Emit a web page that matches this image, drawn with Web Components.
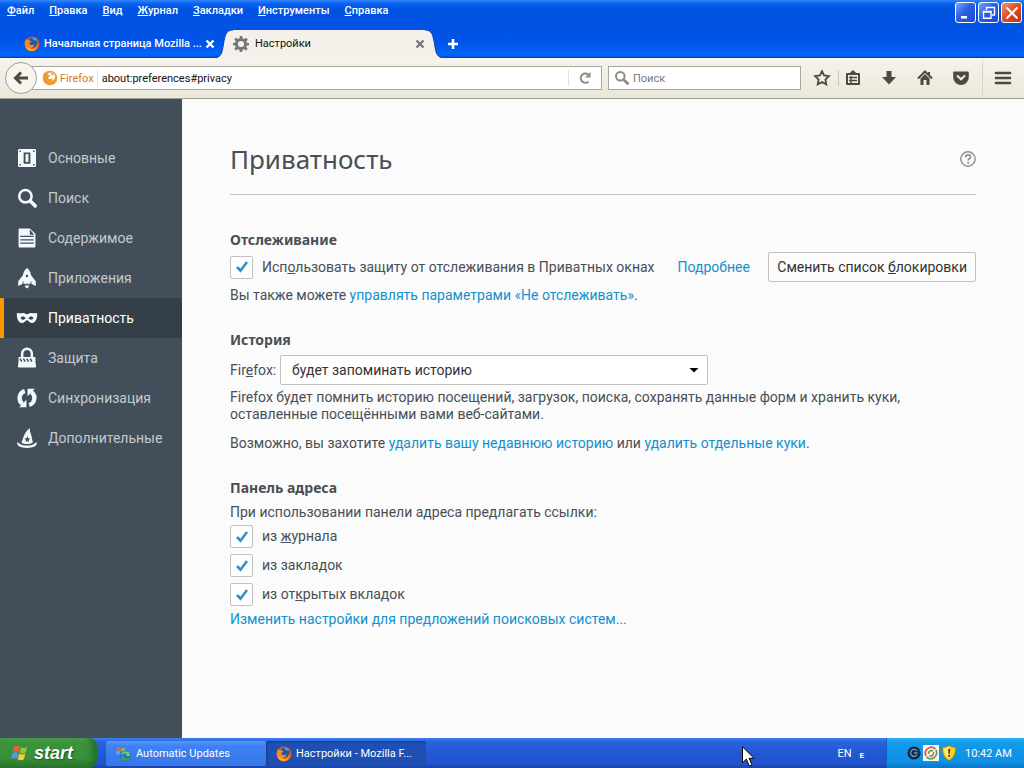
<!DOCTYPE html>
<html lang="ru">
<head>
<meta charset="utf-8">
<title>Настройки</title>
<style>
    body {
        margin: 0;
        font-family: Roboto, "Noto Sans", sans-serif;
        font-size: 14px;
        line-height: 17px;
    }
</style>
</head>
<body>
<desktop-screen>
    <title-bar slot="window"></title-bar>
    <nav-toolbar slot="window"></nav-toolbar>
    <prefs-sidebar slot="side">
        <category-item icon="general">Основные</category-item>
        <category-item icon="search">Поиск</category-item>
        <category-item icon="content">Содержимое</category-item>
        <category-item icon="apps">Приложения</category-item>
        <category-item icon="privacy" selected>Приватность</category-item>
        <category-item icon="security">Защита</category-item>
        <category-item icon="sync">Синхронизация</category-item>
        <category-item icon="advanced">Дополнительные</category-item>
    </prefs-sidebar>
    <privacy-pane slot="main"></privacy-pane>
    <task-bar slot="taskbar"></task-bar>
</desktop-screen>

<script>
const ICONS = {
    firefox: `<circle cx="8" cy="8" r="7.5" fill="#e2581b"/><circle cx="8.5" cy="6.8" r="5" fill="#27589b"/><path d="M8 2c3-.5 5 1 5.500 3-1-1-2-1-3-.5z" fill="#59a8da"/><path d="M1.500 3.500C3 4 4 4 5 3.500c.3 1 1.200 1.400 2.300 1.800-.2 1-1.800 1.200-1.800 2.200 0 1.800 3 2.300 5 .8-.5 2.700-2.500 4-4.700 3.700 3 2 7.200-.5 7.400-4.700 1.500 3-.8 7.800-5.200 7.900C3 15.500-1 10 1.500 3.500z" fill="#f58a20"/><path d="M2 11c2 3.500 6.500 5 10 2-3 1-6 .5-8-1.500z" fill="#ffc22e"/>`,
    identity: `<circle cx="8" cy="8" r="7.300" fill="#f19a31"/><circle cx="9" cy="6.500" r="4" fill="#fff"/><path d="M2 2.500 5.500 4c.6 1 1.500 1 2.800 1.500-.2 1.200-2 1-2 2.300 0 1.500 2.500 2 4.700.5-.5 2.500-3 3.700-5 3.200C3 11 1 7 2 2.500z" fill="#f19a31"/><path d="M9 2.500c2 .4 3 2 2.800 3.500-.6-.8-1.400-1-2.300-1z" fill="#f19a31"/>`,
    gear: `<path d="M6.800 0h2.400l.4 2.500 1.500.6 2-1.400 1.700 1.700-1.400 2 .5 1.400 2.100.2v2.200l-2.200.4-.5 1.400 1.400 2-1.700 1.600-2-1.300-1.400.5L9.200 16H6.800l-.4-2.200-1.500-.5-2 1.300L1.300 13l1.400-2-.6-1.400L0 9.200V7l2.200-.4.5-1.300-1.400-2L3 1.700l2 1.400 1.400-.6zM8 4.900a3.100 3.100 0 1 0 0 6.200 3.100 3.100 0 0 0 0-6.200z" fill="#767676" fill-rule="evenodd"/>`,
    close: `<path d="m4.500 4.500 7 7m0-7-7 7" stroke="currentColor" stroke-width="2.400" fill="none"/>`,
    plus: `<path d="M8 3v10M3 8h10" stroke="currentColor" stroke-width="2.600"/>`,
    back: `<path d="M8 2.500 2.500 8 8 13.500M3 8h12" stroke="currentColor" stroke-width="3" fill="none"/>`,
    reload: `<path d="M11.600 11.500A4.600 4.600 0 1 1 11.200 4.500" stroke="currentColor" stroke-width="2" fill="none"/><path d="M13.500 2v5.500H8z" fill="currentColor"/>`,
    magnifier: `<circle cx="6.300" cy="6.300" r="4.300" stroke="currentColor" stroke-width="2" fill="none"/><path d="m9.700 9.700 4.800 4.500" stroke="currentColor" stroke-width="2.800"/>`,
    star: `<path d="m8 1.200 2.100 4.300 4.800.7-3.500 3.400.9 4.800L8 12.100l-4.300 2.300.9-4.800L1.100 6.200l4.800-.7z" stroke="currentColor" stroke-width="1.800" fill="none"/>`,
    list: `<path d="M2 4h3l1.500-1.300L8 1.300l1.500 1.400L11 4h3v10H2z" fill="none" stroke="currentColor" stroke-width="2" stroke-linejoin="round"/><path d="M5 3h6v2H5z" fill="currentColor"/><path d="M4 7.500h8M4 10.500h8M6 6v7" stroke="currentColor" stroke-width="1.400"/>`,
    download: `<path d="M5.500 1h5v6H15l-7 7.500L1 7h4.500z" fill="currentColor"/>`,
    home: `<path d="m1 8.500 7-7 7 7" fill="none" stroke="currentColor" stroke-width="2"/><path d="M11 2h2v4h-2zM3.500 8.500 8 4l4.500 4.500V15h-3v-5h-3v5h-3z" fill="currentColor"/>`,
    pocket: `<path d="M1.500 1.500h13c.8 0 1.300.5 1.300 1.300v4.400a7.800 7.800 0 0 1-15.600 0V2.800c0-.8.500-1.300 1.300-1.300z" fill="currentColor"/><path d="M4.500 6 8 9.300 11.500 6" fill="none" stroke="#efece0" stroke-width="2" stroke-linecap="round"/>`,
    menu: `<path d="M1 3h14M1 8h14M1 13h14" stroke="currentColor" stroke-width="2.700" stroke-linecap="round"/>`,
    general: `<path fill-rule="evenodd" d="M1 0h14a1 1 0 0 1 1 1v14a1 1 0 0 1-1 1H1a1 1 0 0 1-1-1V1a1 1 0 0 1 1-1zM5 3v10h6V3zM1.300 1.300v1.300h1.300V1.300zm12.100 0v1.300h1.300V1.300zM1.300 13.400v1.300h1.300v-1.300zm12.100 0v1.300h1.300v-1.300z" fill="currentColor"/><path d="M6.700 4.500h2.600v7H6.700z" fill="currentColor"/>`,
    search: `<circle cx="6.600" cy="6.400" r="5.500" stroke="currentColor" stroke-width="2.300" fill="none"/><path d="m10.900 10.700 4.400 4.300" stroke="currentColor" stroke-width="3.200" stroke-linecap="round"/>`,
    content: `<path fill-rule="evenodd" d="M1.500-.5h9l5 4.800v11c0 .7-.4 1.200-1 1.200h-13c-.6 0-1-.5-1-1.200V.5c0-.6.400-1 1-1zm9 1V5h4zM2 6v1.200h12V6zm0 3v1.200h12V9zm0 3v1.200h12V12z" fill="currentColor"/>`,
    apps: `<path d="M8-1c2.200 1.600 3.300 3.800 3.600 6.500l4.200 5.300V15l-4-1.800H4.200l-4 1.800v-4.200l4.200-5.300C4.700 2.800 5.800.6 8-1z" fill="currentColor"/><path d="M6 14h4c0 1.800-.7 2.500-2 3.300-1.300-.8-2-1.500-2-3.300z" fill="currentColor"/><circle cx="8" cy="6.300" r="1.100" fill="#424f5a"/><path d="M4.500 11v2.500m7-2.500v2.500M6 14.500h4" stroke="#424f5a" stroke-width=".7"/>`,
    privacy: `<path fill-rule="evenodd" d="M-1 3.500C2 4.500 4 3 6 4c1 .4 1.500.8 2 .8s1-.4 2-.8c2-1 4 .5 7-.5.300 4-.8 8.500-4.500 8.900C10 12.600 9.300 10 8 10s-2 2.600-4.500 2.400C-.2 12-1.300 7.500-1 3.500zM2.200 8c1 2 3 2 4.600.2C5.500 6.200 3.500 6 2.200 8zm7 .2c1.600 1.800 3.600 1.800 4.600-.2-1.300-2-3.300-1.800-4.600.2z" fill="currentColor"/>`,
    security: `<path d="M3.700 7V4a4.300 4.300 0 0 1 8.600 0v3" fill="none" stroke="currentColor" stroke-width="2.200"/><path d="M.5 7h15v4l.6 4.500q0 1-1 1H.9q-1 0-1-1L.5 11z" fill="currentColor"/><path d="m1.800 8.500 1.600 2.800M4.800 8.500l1.600 2.800M7.800 8.500l1.600 2.800M10.800 8.500l1.600 2.800" stroke="#424f5a" stroke-width="1.300"/>`,
    sync: `<path d="M6 1.800a6.500 6.500 0 0 0-2 11.400" fill="none" stroke="currentColor" stroke-width="3.800"/><path d="M10 14.200a6.500 6.500 0 0 0 2-11.400" fill="none" stroke="currentColor" stroke-width="3.800"/><path d="M1 16.300h6.500V9.500zM15-.3H8.500v6.800z" fill="currentColor"/>`,
    advanced: `<path d="M10.700-1c-.5 2 .2 3.500 1 6l1.500 7c-3 1.800-7.500 1.800-10.200 0C5 8 5 3 10.700-1z" fill="currentColor"/><path d="M-.5 11.500c3.500 4.300 13.500 4.300 17 0 1.300 3.500-3 5.300-8.500 5.300S-1.700 15-.5 11.500z" fill="currentColor"/><path d="m8.300 6.500.8 1.700 1.800.2-1.300 1.300.3 1.900-1.600-.9-1.600.9.300-1.900-1.300-1.300 1.800-.2z" fill="#424f5a"/>`,
    help: `<circle cx="8" cy="8" r="7.200" fill="none" stroke="currentColor" stroke-width="1.400"/><path d="M5.600 6.200c.1-1.600 1-2.300 2.500-2.300 1.400 0 2.400.8 2.400 2 0 1.800-2.300 1.900-2.300 3.600" fill="none" stroke="currentColor" stroke-width="1.800"/><circle cx="8.200" cy="11.800" r="1.100" fill="currentColor"/>`,
    check: `<path d="m3 8 3.500 3.700L13 3" fill="none" stroke="#3192c8" stroke-width="2.600"/>`,
    dropdown: `<path d="M3.500 6h9L8 10.500z" fill="#000"/>`,
    minimize: `<path d="M3 11h6v2.500H3z" fill="currentColor"/>`,
    restore: `<path d="M5.500 5V2.500h8V10H11" fill="none" stroke="currentColor" stroke-width="1.400"/><path d="M2.500 6.500H10v6.800H2.500z" fill="none" stroke="currentColor" stroke-width="1.400"/><path d="M2 6h8.500v1.600H2z" fill="currentColor"/>`,
    shut: `<path d="m2.500 2.500 11 11m0-11-11 11" stroke="currentColor" stroke-width="2"/>`,
    flag: `<path d="M2.500 2.500c2-1.300 3.500-1.200 5.300-.2L6.600 7.200c-1.800-1-3.300-1-5.200.2z" fill="#ef6234"/><path d="M8.700 2.800c2 1 3.500 1 5.600-.2L13 7.500c-2 1.200-3.600 1.200-5.500.2z" fill="#8cc83c"/><path d="M1.200 8.400c2-1.300 3.500-1.200 5.200-.2l-1.200 5c-1.800-1-3.300-1-5.200.2z" fill="#5b93ee"/><path d="M7.200 8.700c2 1 3.600 1 5.600-.2l-1.300 5c-2 1.200-3.600 1.200-5.500.2z" fill="#fbca38"/>`,
    updates: `<path d="M1 1.500c2-1 3 0 4 .3L4.300 5C3 4.500 2 4.300.5 5z" fill="#e9682e"/><path d="M5.500 2c1.500.6 2.500.5 4 0L8.700 5.200c-1.300.5-2.500.5-3.700 0z" fill="#8bc34a"/><path d="M.5 5.500c1.500-.7 2.500-.4 3.600 0l-.7 3.300C2 8.200 1 8.200 0 8.900z" fill="#71a6f5"/><circle cx="9.500" cy="10" r="5.500" fill="#2670b8"/><path d="M5 8c2-3 5-3.500 7.500-1.500l1-1 .5 4.500H9.500l1.300-1.500C9 7 7 7.200 5 10z" fill="#6ed068"/><path d="M14 12c-2 3-5 3.500-7.500 1.500l-1 1L5 10.500h4L7.900 12c2 1.200 4 .8 6-1z" fill="#44a74a"/>`,
    agent: `<circle cx="8" cy="8" r="7.500" fill="#10284c"/><path d="M11.300 5.500A4 4 0 1 0 11.500 10M8 8h4" stroke="#6e9fc0" stroke-width="1.500" fill="none"/>`,
    ring: `<path d="M0 0h16v16H0z" fill="#fff5ec"/><path d="M3 11A6 6 0 0 1 12.500 4" fill="none" stroke="#e15b50" stroke-width="1.800"/><path d="M13 5A6 6 0 0 1 3.500 12" fill="none" stroke="#55a85a" stroke-width="1.800"/><path d="M5.500 9A3 3 0 0 1 10 6" fill="none" stroke="#44a34b" stroke-width="1.500"/><path d="M10.500 7A3 3 0 0 1 6 10.500" fill="none" stroke="#d95449" stroke-width="1.500"/>`,
    shield: `<path d="M8 .3c2 1.600 4 2 6.500 2 .3 6-1.500 10.700-6.500 13.400C3 13 1.200 8.300 1.500 2.300 4 2.300 6 1.900 8 .3z" fill="#f6cf27" stroke="#a78613"/><path d="M3 3.500c2 0 3-.4 5-1.500v11.800C4.500 11.500 3 8 3 3.500z" fill="#ffe984"/><path d="M7.200 4h1.800l-.3 5H7.500zm0 6h1.700v1.700H7.200z" fill="#403100"/>`
};

/** Registers an element whose shadow root is cloned from the given markup. */
function define(name, html, setup) {
    const template = document.createElement('template');
    template.innerHTML = `<style>:host, *, *::before, *::after { box-sizing: border-box; }</style>${html}`;

    customElements.define(name, class extends HTMLElement {
        constructor() {
            super();
            this.attachShadow({ mode: 'open' });
            this.shadowRoot.appendChild(template.content.cloneNode(true));
        }

        connectedCallback() {
            if (setup) {
                setup(this, this.shadowRoot);
            }
        }
    });
}

define('ui-icon', `
    <style>
        :host { display: inline-block; flex: none; width: 16px; height: 16px; }
        svg { display: block; width: 100%; height: 100%; overflow: visible; }
    </style>
    <svg viewBox="0 0 16 16" aria-hidden="true"></svg>
`, (el, root) => {
    root.querySelector('svg').innerHTML = ICONS[el.getAttribute('name')] || '';
});

define('desktop-screen', `
    <style>
        :host { display: flex; flex-direction: column; min-height: 100vh; background: #fbfbfb; }
        .page { flex: 1; display: flex; }
        main { flex: 1; min-width: 0; }
        .side { display: flex; }
        .pointer { position: absolute; left: 742px; top: 746px; width: 13px; height: 21px; }
    </style>
    <slot name="window"></slot>
    <div class="page">
        <div class="side"><slot name="side"></slot></div>
        <main><slot name="main"></slot></main>
    </div>
    <slot name="taskbar"></slot>
    <svg class="pointer" viewBox="0 0 13 21" aria-hidden="true">
        <path d="M.5.8v16l3.800-3.600 3 6.800 2.700-1.200-3-6.500h5z" fill="#fff" stroke="#000"/>
    </svg>
`);

define('title-bar', `
    <style>
        :host {
            display: block;
            background: linear-gradient(#2f86fb 0, #0a5fef 4px, #0053e1 10px, #0054e6 42px, #0064fc 54px, #0063f8 56px, #0a3698 58px);
            color: #fff;
            font-size: 11px;
            line-height: 16px;
        }
        .top { display: flex; justify-content: space-between; align-items: flex-start; height: 30px; padding: 2px 2px 0 7px; }
        .menu { display: flex; gap: 15px; padding-top: 1px; }
        .menu button { padding: 0; border: 0; background: none; font: inherit; font-weight: 500; color: inherit; }
        .caption { display: flex; gap: 2px; }
        .caption button {
            display: grid;
            place-items: center;
            width: 21px;
            height: 21px;
            padding: 0;
            border: 1px solid #fff;
            border-radius: 3px;
            background: linear-gradient(135deg, #7ba4f4, #2b5fe4 45%, #1d48cf);
            color: #fff;
        }
        .caption .shut { background: linear-gradient(135deg, #f0997e, #dc4f27 45%, #b93310); }
        .tabs { display: flex; height: 28px; padding-left: 24px; }
        .tab { display: flex; align-items: center; }
        .tab button, .new { display: flex; padding: 0; border: 0; background: none; color: inherit; }
        .label { flex: 1; min-width: 0; white-space: nowrap; }
        .idle { gap: 4px; width: 189px; font-weight: 500; }
        .idle .label { flex: 0 0 154px; }
        .active { width: 232px; }
        .body { flex: 1; align-self: stretch; display: flex; align-items: center; gap: 6px; min-width: 0; background: #f3f1ea; color: #111; }
        .body button { margin-right: -3px; color: #777; }
        .edge { flex: none; width: 20px; height: 28px; }
        .edge.end { transform: scaleX(-1); }
        .new { align-items: center; }
    </style>
    <div class="top">
        <nav class="menu">
            <button><u>Ф</u>айл</button>
            <button><u>П</u>равка</button>
            <button><u>В</u>ид</button>
            <button><u>Ж</u>урнал</button>
            <button><u>З</u>акладки</button>
            <button><u>И</u>нструменты</button>
            <button><u>С</u>правка</button>
        </nav>
        <div class="caption">
            <button aria-label="Свернуть"><ui-icon name="minimize"></ui-icon></button>
            <button aria-label="Восстановить"><ui-icon name="restore"></ui-icon></button>
            <button class="shut" aria-label="Закрыть"><ui-icon name="shut"></ui-icon></button>
        </div>
    </div>
    <div class="tabs">
        <div class="tab idle">
            <ui-icon name="firefox"></ui-icon>
            <span class="label">Начальная страница Mozilla ...</span>
            <button aria-label="Закрыть вкладку"><ui-icon name="close"></ui-icon></button>
        </div>
        <div class="tab active">
            <svg class="edge" viewBox="0 0 20 28" aria-hidden="true"><path d="M0 28C9 28 9 22 10.500 14 12 5 13 0 20 0v28z" fill="#f3f1ea"/><path d="M0 28C9 28 9 22 10.500 14 12 5 13 0 20 0" fill="none" stroke="#0c42a8"/></svg>
            <div class="body">
                <ui-icon name="gear"></ui-icon>
                <span class="label">Настройки</span>
                <button aria-label="Закрыть вкладку"><ui-icon name="close"></ui-icon></button>
            </div>
            <svg class="edge end" viewBox="0 0 20 28" aria-hidden="true"><path d="M0 28C9 28 9 22 10.500 14 12 5 13 0 20 0v28z" fill="#f3f1ea"/><path d="M0 28C9 28 9 22 10.500 14 12 5 13 0 20 0" fill="none" stroke="#0c42a8"/></svg>
        </div>
        <button class="new" aria-label="Новая вкладка"><ui-icon name="plus"></ui-icon></button>
    </div>
`);

define('nav-toolbar', `
    <style>
        :host {
            display: flex;
            align-items: center;
            height: 41px;
            padding: 0 3px 0 5px;
            border-bottom: 1px solid #a09d94;
            background: linear-gradient(#f5f3ee, #ebe8d9);
            color: #4d4b3f;
            font-size: 11px;
        }
        button { display: grid; place-items: center; padding: 0; border: 0; background: none; color: inherit; }
        .back { position: relative; width: 32px; height: 32px; border: 1px solid #a3a095; border-radius: 50%; background: #f6f5f0; }
        .field { display: flex; align-items: center; height: 24px; border: 1px solid #a9a69b; background: #fff; }
        .url { flex: 1; margin-left: -5px; padding-left: 9px; }
        .url b { margin: 0 4px 0 2px; padding-right: 3px; border-right: 1px solid #e8e5dc; color: #d57a1a; font-weight: 400; }
        .url button { width: 33px; height: 16px; border-left: 1px solid #e4e2dc; color: #8b8b86; }
        input { flex: 1; min-width: 0; height: 20px; padding: 0; border: 0; outline: 0; background: none; font: inherit; color: #111; }
        input::placeholder { color: #777; opacity: 1; }
        .find { width: 193px; margin: 0 9px 0 6px; padding-left: 5px; gap: 3px; color: #8b8b86; }
        .tools { display: flex; align-items: center; }
        .tools button { width: 36px; height: 24px; }
        .tools .mark { width: 24px; margin-right: 4px; }
        .tools .list { width: 32px; padding-right: 4px; }
        .line { width: 1px; height: 16px; background: #c9c6b8; }
        .line.tall { height: 34px; margin: 0 2px 0 3px; background: #d8d5c8; }
    </style>
    <button class="back" aria-label="Назад"><ui-icon name="back"></ui-icon></button>
    <div class="field url">
        <ui-icon name="identity"></ui-icon>
        <b>Firefox</b>
        <input aria-label="Адрес" value="about:preferences#privacy">
        <button aria-label="Обновить"><ui-icon name="reload"></ui-icon></button>
    </div>
    <div class="field find">
        <ui-icon name="magnifier"></ui-icon>
        <input aria-label="Поиск" placeholder="Поиск">
    </div>
    <div class="tools">
        <button class="mark" aria-label="Добавить закладку"><ui-icon name="star"></ui-icon></button>
        <span class="line"></span>
        <button class="list" aria-label="Закладки"><ui-icon name="list"></ui-icon></button>
        <button aria-label="Загрузки"><ui-icon name="download"></ui-icon></button>
        <button aria-label="Домой"><ui-icon name="home"></ui-icon></button>
        <button aria-label="Pocket"><ui-icon name="pocket"></ui-icon></button>
        <span class="line tall"></span>
        <button aria-label="Меню"><ui-icon name="menu"></ui-icon></button>
    </div>
`);

define('prefs-sidebar', `
    <style>
        :host { display: block; width: 182px; padding-top: 39px; background: #424f5a; }
    </style>
    <nav><slot></slot></nav>
`);

define('category-item', `
    <style>
        :host { display: block; color: #c4c9cd; }
        a {
            display: flex;
            align-items: center;
            gap: 12px;
            height: 40px;
            padding-left: 14px;
            border-left: 4px solid transparent;
            color: inherit;
            text-decoration: none;
        }
        ui-icon { width: 18px; height: 18px; color: #f4f9fd; }
        :host([selected]) { background: #343f48; color: #fff; }
        :host([selected]) a { border-left-color: #ff9500; }
    </style>
    <a href="#"><ui-icon></ui-icon><slot></slot></a>
`, (el, root) => {
    const icon = document.createElement('ui-icon');
    icon.setAttribute('name', el.getAttribute('icon'));
    root.querySelector('ui-icon').replaceWith(icon);
});

define('check-option', `
    <style>
        :host { display: block; }
        label { display: flex; align-items: center; gap: 9px; }
        .box { display: grid; place-items: center; }
        .box > * { grid-area: 1 / 1; }
        input { appearance: none; width: 23px; height: 23px; margin: 0; border: 1px solid #c1c1c1; border-radius: 2px; background: #fff; }
        ui-icon { display: none; pointer-events: none; }
        input:checked + ui-icon { display: block; }
    </style>
    <label>
        <span class="box"><input type="checkbox" checked><ui-icon name="check"></ui-icon></span>
        <span><slot></slot></span>
    </label>
`);

define('prefs-group', `
    <style>
        :host { display: block; }
        h2 { margin: 0; font: 700 14px/20px "Noto Sans", sans-serif; }
    </style>
    <section><h2></h2><slot></slot></section>
`, (el, root) => {
    root.querySelector('h2').textContent = el.getAttribute('heading');
});

define('privacy-pane', `
    <style>
        :host { display: block; padding: 41px 48px 48px; color: #484f56; }
        header { display: flex; align-items: center; justify-content: space-between; padding-bottom: 16px; border-bottom: 1px solid #c1c1c1; }
        h1 { margin: 0; font: 400 26px/38px "Noto Sans", sans-serif; }
        .help { display: flex; padding: 0; border: 0; background: none; color: #8f8f8f; }
        .groups { display: flex; flex-direction: column; gap: 26px; margin-top: 35px; }
        p { margin: 0; }
        a { color: #1490cb; text-decoration: none; }
        .row { display: flex; align-items: center; margin: 2px 0 5px; }
        .row a { margin-left: 23px; }
        .change { height: 30px; margin-left: auto; padding: 0 8px; border: 1px solid #c1c1c1; border-radius: 2px; background: #fbfbfb; font: inherit; color: #333; white-space: nowrap; }
        .mode { display: flex; align-items: center; margin: 5px 0 4px; }
        .mode label { min-width: 50px; }
        .picker { display: grid; align-items: center; flex: 0 1 428px; }
        .picker > * { grid-area: 1 / 1; }
        .picker ui-icon { justify-self: end; margin-right: 6px; pointer-events: none; }
        select { appearance: none; height: 30px; padding: 0 24px 0 11px; border: 1px solid #c1c1c1; border-radius: 2px; background: #fff; font: inherit; color: #333; }
        .clear { margin-top: 12px; }
        .hint { margin-top: 6px; }
        .options { display: flex; flex-direction: column; gap: 6px; margin: 4px 0 5px; }
    </style>
    <header>
        <h1>Приватность</h1>
        <button class="help" aria-label="Справка"><ui-icon name="help"></ui-icon></button>
    </header>
    <div class="groups">
        <prefs-group heading="Отслеживание">
            <div class="row">
                <check-option>Исп<u>о</u>льзовать защиту от отслеживания в Приватных окнах</check-option>
                <a href="#">Подробнее</a>
                <button class="change">Сменить список <u>б</u>локировки</button>
            </div>
            <p>Вы также можете <a href="#">управлять параметрами «Не отслеживать»</a>.</p>
        </prefs-group>
        <prefs-group heading="История">
            <div class="mode">
                <label for="history-mode">Fir<u>e</u>fox:</label>
                <div class="picker">
                    <select id="history-mode"><option>будет запоминать историю</option></select>
                    <ui-icon name="dropdown"></ui-icon>
                </div>
            </div>
            <p>Firefox будет помнить историю посещений, загрузок, поиска, сохранять данные форм и хранить куки,<br>оставленные посещёнными вами веб-сайтами.</p>
            <p class="clear">Возможно, вы захотите <a href="#">удалить вашу недавнюю историю</a> или <a href="#">удалить отдельные куки</a>.</p>
        </prefs-group>
        <prefs-group heading="Панель адреса">
            <p class="hint">При использовании панели адреса предлагать ссылки:</p>
            <div class="options">
                <check-option>из <u>ж</u>урнала</check-option>
                <check-option>из закла<u>д</u>ок</check-option>
                <check-option>из от<u>к</u>рытых вкладок</check-option>
            </div>
            <a href="#">Изменить настройки для предложений поисковых систем...</a>
        </prefs-group>
    </div>
`);

define('task-bar', `
    <style>
        :host {
            display: flex;
            align-items: stretch;
            height: 30px;
            background: linear-gradient(#3a80ee 0, #2a62dd 4px, #2358d4 15px, #2053cc 26px, #1c429e 30px);
            color: #fff;
            font-size: 11px;
        }
        button { border: 0; font: inherit; color: inherit; }
        .start {
            display: flex;
            align-items: center;
            gap: 5px;
            width: 97px;
            margin-right: 9px;
            padding: 0 0 0 11px;
            border-radius: 0 8px 8px 0;
            background: linear-gradient(#5fb45c 0, #3c933c 5px, #36913a 20px, #2b762c 30px);
            box-shadow: inset -5px 0 6px #246f28;
            font: italic bold 18px/26px "Liberation Sans", sans-serif;
            text-shadow: 1px 1px 2px #1c4d1c;
        }
        .start ui-icon { width: 18px; height: 18px; }
        .task {
            display: flex;
            align-items: center;
            gap: 4px;
            width: 160px;
            margin: 3px 0 2px;
            padding: 0 10px;
            border-radius: 2px;
            background: linear-gradient(#5b98fb, #3c81f3 5px, #3776e9);
            white-space: nowrap;
        }
        .task.current { background: #1e4fb2; box-shadow: inset 1px 1px 2px #133a8b; }
        .lang { display: flex; align-items: center; gap: 8px; margin-left: auto; padding-right: 22px; }
        .lang small { padding-top: 4px; font-size: 8px; font-weight: 700; }
        .tray {
            display: flex;
            align-items: center;
            gap: 2px;
            width: 138px;
            padding-left: 20px;
            border-left: 1px solid #0a5fc0;
            background: linear-gradient(#29b3f5 0, #139ae9 5px, #0f90e4 24px, #0b73c4 30px);
        }
        .tray time { margin-left: 6px; white-space: nowrap; }
        .tray ui-icon:first-child { width: 14px; height: 14px; }
    </style>
    <button class="start"><ui-icon name="flag"></ui-icon>start</button>
    <button class="task"><ui-icon name="updates"></ui-icon>Automatic Updates</button>
    <button class="task current"><ui-icon name="firefox"></ui-icon>Настройки - Mozilla F...</button>
    <div class="lang"><span>EN</span><small>E</small></div>
    <div class="tray">
        <ui-icon name="agent"></ui-icon>
        <ui-icon name="ring"></ui-icon>
        <ui-icon name="shield"></ui-icon>
        <time>10:42 AM</time>
    </div>
`);
</script>
</body>
</html>
